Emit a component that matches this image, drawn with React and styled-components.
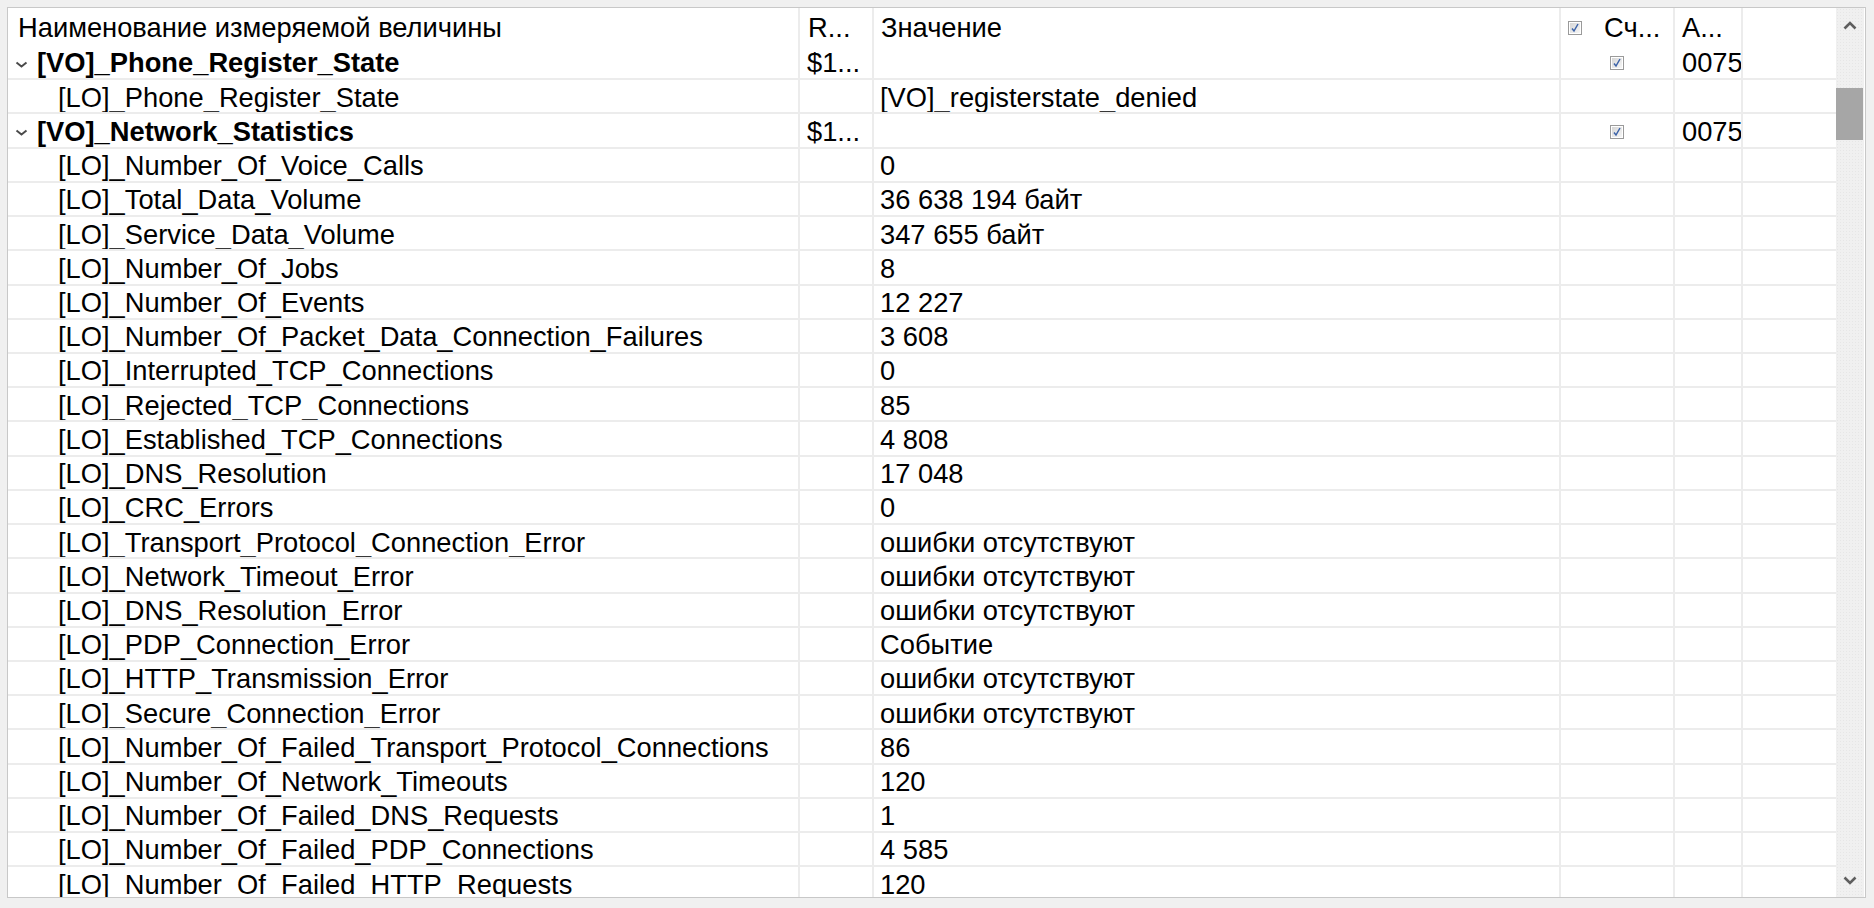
import React from "react";
import styled, { createGlobalStyle } from "styled-components";

const Global = createGlobalStyle`
  html, body { margin: 0; padding: 0; background: #f0f0f0; }
  body { font-family: "Liberation Sans", Arial, sans-serif; }
`;

const Page = styled.div`
  padding: 7px 8px 10px 7px;
  height: 908px;
  box-sizing: border-box;
`;

const Panel = styled.div`
  border: 1px solid #c8c8c8;
  background: #ffffff;
  height: 891px;
  box-sizing: border-box;
  display: flex;
  overflow: hidden;
`;

const TableArea = styled.div`
  flex: 1;
  display: grid;
  grid-template-columns: 792px 74px 687px 114px 68px 1fr;
  grid-template-rows: 38px;
  grid-auto-rows: 34.23px;
  align-content: start;
  overflow: hidden;
  font-size: 27.3px;
  color: #000;
`;

const Cell = styled.div`
  box-sizing: border-box;
  border-right: 2px solid #ececec;
  border-bottom: ${(p) => (p.$header ? "none" : "2px solid #ececec")};
  display: flex;
  align-items: center;
  justify-content: ${(p) => (p.$center ? "center" : "flex-start")};
  padding-left: ${(p) => p.$pad ?? 7}px;
  white-space: nowrap;
  overflow: hidden;
  font-weight: ${(p) => (p.$bold ? 700 : 400)};
  line-height: 1;
  padding-top: 2px;
`;

const Filler = styled(Cell)`
  border-right: none;
`;

const Chevron = styled.svg`
  width: 13px;
  height: 7px;
  margin-right: 9px;
  margin-top: 2px;
  flex: none;
`;

const HeadCheck = styled.span`
  display: inline-flex;
  margin: 0 22px 0 0;
`;

const Scrollbar = styled.div`
  width: 28px;
  margin-right: 1px;
  background-color: #f0f0f0;
  background-image: radial-gradient(#e6e6e6 0.6px, transparent 0.8px);
  background-size: 3px 3px;
  display: flex;
  flex-direction: column;
  align-items: center;
`;

const ArrowBtn = styled.div`
  height: 34px;
  width: 100%;
  display: flex;
  align-items: center;
  justify-content: center;
`;

const Track = styled.div`
  flex: 1;
  width: 100%;
  padding-top: 46px;
  box-sizing: border-box;
`;

const Thumb = styled.div`
  height: 52px;
  width: 27px;
  background: #a6a6a6;
`;

function Caret() {
  return (
    <Chevron viewBox="0 0 13 7">
      <polyline points="1.5,1.5 6.5,5.5 11.5,1.5" fill="none" stroke="#4a4a4a" strokeWidth="2" />
    </Chevron>
  );
}

function Check() {
  return (
    <svg width="14" height="14" viewBox="0 0 14 14">
      <defs>
        <linearGradient id="cbg" x1="0" y1="0" x2="1" y2="1">
          <stop offset="0" stopColor="#d6d6d6" />
          <stop offset="1" stopColor="#f6f6f6" />
        </linearGradient>
      </defs>
      <rect x="0.5" y="0.5" width="13" height="13" fill="#ffffff" stroke="#9a9a9a" />
      <rect x="2" y="2" width="10" height="10" fill="url(#cbg)" />
      <polyline points="4,7.5 6,10 10,3" fill="none" stroke="#3b62a8" strokeWidth="1.5" />
    </svg>
  );
}

function Arrow({ down }) {
  return (
    <svg width="14" height="9" viewBox="0 0 14 9">
      <polyline
        points={down ? "1.5,1.5 7,7 12.5,1.5" : "1.5,7.5 7,2 12.5,7.5"}
        fill="none"
        stroke="#5e5e5e"
        strokeWidth="2.6"
      />
    </svg>
  );
}

const rows = [
  { group: true, name: "[VO]_Phone_Register_State", r: "$1...", value: "", check: true, a: "0075" },
  { name: "[LO]_Phone_Register_State", value: "[VO]_registerstate_denied" },
  { group: true, name: "[VO]_Network_Statistics", r: "$1...", value: "", check: true, a: "0075" },
  { name: "[LO]_Number_Of_Voice_Calls", value: "0" },
  { name: "[LO]_Total_Data_Volume", value: "36 638 194 байт" },
  { name: "[LO]_Service_Data_Volume", value: "347 655 байт" },
  { name: "[LO]_Number_Of_Jobs", value: "8" },
  { name: "[LO]_Number_Of_Events", value: "12 227" },
  { name: "[LO]_Number_Of_Packet_Data_Connection_Failures", value: "3 608" },
  { name: "[LO]_Interrupted_TCP_Connections", value: "0" },
  { name: "[LO]_Rejected_TCP_Connections", value: "85" },
  { name: "[LO]_Established_TCP_Connections", value: "4 808" },
  { name: "[LO]_DNS_Resolution", value: "17 048" },
  { name: "[LO]_CRC_Errors", value: "0" },
  { name: "[LO]_Transport_Protocol_Connection_Error", value: "ошибки отсутствуют" },
  { name: "[LO]_Network_Timeout_Error", value: "ошибки отсутствуют" },
  { name: "[LO]_DNS_Resolution_Error", value: "ошибки отсутствуют" },
  { name: "[LO]_PDP_Connection_Error", value: "Событие" },
  { name: "[LO]_HTTP_Transmission_Error", value: "ошибки отсутствуют" },
  { name: "[LO]_Secure_Connection_Error", value: "ошибки отсутствуют" },
  { name: "[LO]_Number_Of_Failed_Transport_Protocol_Connections", value: "86" },
  { name: "[LO]_Number_Of_Network_Timeouts", value: "120" },
  { name: "[LO]_Number_Of_Failed_DNS_Requests", value: "1" },
  { name: "[LO]_Number_Of_Failed_PDP_Connections", value: "4 585" },
  { name: "[LO]_Number_Of_Failed_HTTP_Requests", value: "120" },
];

export default function App() {
  return (
    <>
      <Global />
      <Page>
        <Panel>
          <TableArea>
            <Cell $header $pad={10}>Наименование измеряемой величины</Cell>
            <Cell $header $pad={8}>R...</Cell>
            <Cell $header $pad={7}>Значение</Cell>
            <Cell $header $pad={7}>
              <HeadCheck><Check /></HeadCheck>Сч...
            </Cell>
            <Cell $header $pad={7}>A...</Cell>
            <Filler $header />
            {rows.map((r, i) => (
              <React.Fragment key={i}>
                {r.group ? (
                  <Cell $bold $pad={7}>
                    <Caret />
                    {r.name}
                  </Cell>
                ) : (
                  <Cell $pad={50}>{r.name}</Cell>
                )}
                <Cell $pad={7}>{r.r || ""}</Cell>
                <Cell $pad={6}>{r.value}</Cell>
                <Cell $center $pad={0}>{r.check ? <Check /> : null}</Cell>
                <Cell $pad={7}>{r.a || ""}</Cell>
                <Filler />
              </React.Fragment>
            ))}
          </TableArea>
          <Scrollbar>
            <ArrowBtn><Arrow /></ArrowBtn>
            <Track><Thumb /></Track>
            <ArrowBtn><Arrow down /></ArrowBtn>
          </Scrollbar>
        </Panel>
      </Page>
    </>
  );
}
